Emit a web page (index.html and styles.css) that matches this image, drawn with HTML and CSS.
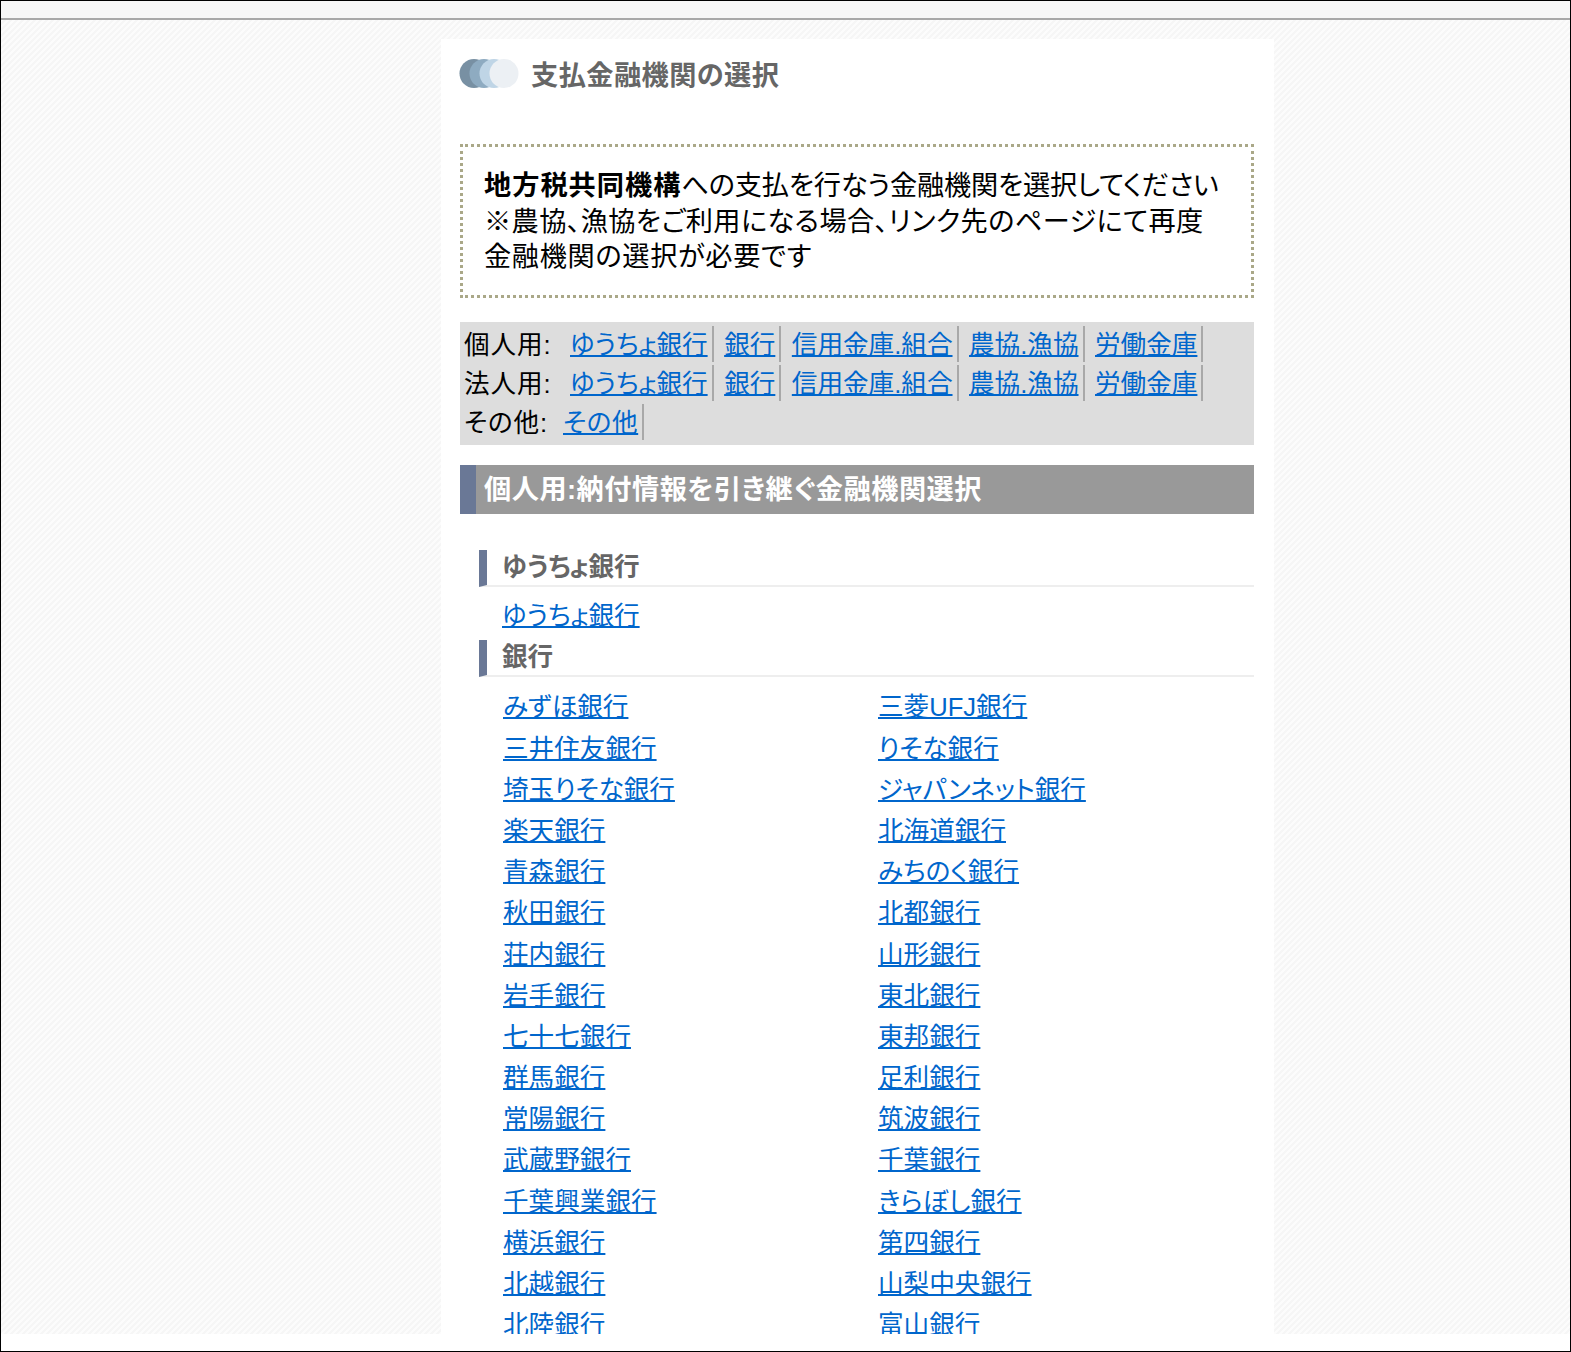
FILE: index.html
```html
<!DOCTYPE html>
<html lang="ja">
<head>
  <meta charset="UTF-8">
  <title>支払金融機関の選択</title>
  <link rel="stylesheet" href="styles.css">
</head>
<body>
  <div class="frame">
    <div class="topbar"></div>
    <div class="stage">
      <div class="column">

        <div class="page-title">
          <svg class="title-icon" width="60" height="31" viewBox="0 0 60 31">
            <defs><filter id="soft"><feGaussianBlur stdDeviation="0.5"/></filter></defs>
            <g filter="url(#soft)">
              <circle cx="15" cy="15.5" r="14.5" fill="#7890a3"/>
              <circle cx="25" cy="15.5" r="14.5" fill="#8eabc1"/>
              <circle cx="35" cy="15.5" r="14.5" fill="#bfd5e6"/>
              <circle cx="45" cy="15.5" r="14.5" fill="#ecf0f4"/>
            </g>
          </svg>
          <span>支払金融機関の選択</span>
        </div>

        <div class="notice">
          <div class="line-one"><strong>地方税共同機構</strong>への支払を行なう金融機関を選択してください</div>
          <div class="line-two">※農協、漁協をご利用になる場合、リンク先のページにて再度</div>
          <div class="line-three">金融機関の選択が必要です</div>
        </div>

        <div class="jump-nav">
          <div class="jump-row">
            <span class="jump-label wide">個人用:</span>
            <a href="#">ゆうちょ銀行</a>
            <a href="#">銀行</a>
            <a href="#">信用金庫.組合</a>
            <a href="#">農協.漁協</a>
            <a href="#">労働金庫</a>
          </div>
          <div class="jump-row">
            <span class="jump-label wide">法人用:</span>
            <a href="#">ゆうちょ銀行</a>
            <a href="#">銀行</a>
            <a href="#">信用金庫.組合</a>
            <a href="#">農協.漁協</a>
            <a href="#">労働金庫</a>
          </div>
          <div class="jump-row">
            <span class="jump-label">その他:</span>
            <a class="kana-link" href="#">その他</a>
          </div>
        </div>

        <h2 class="section-bar">個人用:納付情報を引き継ぐ金融機関選択</h2>

        <h3 class="group-title first">ゆうちょ銀行</h3>
        <div class="bank-list">
          <a href="#">ゆうちょ銀行</a>
        </div>

        <h3 class="group-title">銀行</h3>
        <div class="bank-grid">
          <div><a href="#">みずほ銀行</a></div>
          <div><a href="#">三菱UFJ銀行</a></div>
          <div><a href="#">三井住友銀行</a></div>
          <div><a href="#">りそな銀行</a></div>
          <div><a href="#">埼玉りそな銀行</a></div>
          <div><a href="#">ジャパンネット銀行</a></div>
          <div><a href="#">楽天銀行</a></div>
          <div><a href="#">北海道銀行</a></div>
          <div><a href="#">青森銀行</a></div>
          <div><a href="#">みちのく銀行</a></div>
          <div><a href="#">秋田銀行</a></div>
          <div><a href="#">北都銀行</a></div>
          <div><a href="#">荘内銀行</a></div>
          <div><a href="#">山形銀行</a></div>
          <div><a href="#">岩手銀行</a></div>
          <div><a href="#">東北銀行</a></div>
          <div><a href="#">七十七銀行</a></div>
          <div><a href="#">東邦銀行</a></div>
          <div><a href="#">群馬銀行</a></div>
          <div><a href="#">足利銀行</a></div>
          <div><a href="#">常陽銀行</a></div>
          <div><a href="#">筑波銀行</a></div>
          <div><a href="#">武蔵野銀行</a></div>
          <div><a href="#">千葉銀行</a></div>
          <div><a href="#">千葉興業銀行</a></div>
          <div><a href="#">きらぼし銀行</a></div>
          <div><a href="#">横浜銀行</a></div>
          <div><a href="#">第四銀行</a></div>
          <div><a href="#">北越銀行</a></div>
          <div><a href="#">山梨中央銀行</a></div>
          <div><a href="#">北陸銀行</a></div>
          <div><a href="#">富山銀行</a></div>
        </div>

      </div>
    </div>
  </div>
</body>
</html>
```

FILE: styles.css
```css
html, body {
  margin: 0;
  padding: 0;
  background: #ffffff;
}

body {
  font-family: "Liberation Sans", "Noto Sans CJK JP", sans-serif;
  font-size: 25.6px;
  font-feature-settings: "palt";
  color: #000000;
}

a {
  color: #0066cc;
  text-decoration-thickness: 2px;
}

.frame {
  box-sizing: border-box;
  width: 1571px;
  height: 1352px;
  border: 1px solid #000000;
  overflow: hidden;
}

.topbar {
  height: 17px;
  background: #f7f7f7;
  border-bottom: 2px solid #a8a8a8;
}

.stage {
  height: 1314px;
  padding-left: 440px;
  overflow: hidden;
  background-color: #fcfcfc;
  background-image: linear-gradient(135deg, #fcfcfc 25%, #f6f6f6 25%, #f6f6f6 50%, #fcfcfc 50%, #fcfcfc 75%, #f6f6f6 75%);
  background-size: 6px 6px;
}

.column {
  box-sizing: border-box;
  width: 833px;
  margin-top: 19px;
  padding: 0 20px 0 19px;
  background: #ffffff;
}

.page-title {
  display: flex;
  align-items: center;
  height: 105px;
  padding-bottom: 37px;
  box-sizing: border-box;
  font-size: 27.2px;
  font-weight: bold;
  letter-spacing: 0.45px;
  color: #666666;
}

.title-icon {
  margin: 0 12px 0 -1px;
}

.notice {
  box-sizing: border-box;
  height: 154px;
  padding: 21px 20px 0 21px;
  border: 3px dotted #aaa888;
  font-size: 27.2px;
  line-height: 35.5px;
}

.notice strong {
  letter-spacing: 1px;
}

.line-one {
  letter-spacing: -0.15px;
}

.line-two {
  letter-spacing: 0.4px;
}

.line-three {
  letter-spacing: 0.67px;
}

.jump-nav {
  margin-top: 24px;
  padding: 4px 4px 3px;
  background: #dddddd;
}

.jump-row {
  display: flex;
  height: 38.8px;
  line-height: 38px;
}

.jump-label {
  width: 99px;
  letter-spacing: 0.9px;
}

.jump-label.wide {
  width: 106px;
}

.jump-row a {
  height: 36px;
  margin-right: 10.5px;
  padding-right: 4px;
  border-right: 2px solid #a8a8a8;
}

.jump-row .kana-link {
  letter-spacing: 0.6px;
}

.section-bar {
  margin: 20px 0 0;
  height: 49px;
  padding-left: 8px;
  border-left: 16px solid #6a7896;
  background: #999999;
  color: #ffffff;
  font-size: 27.2px;
  font-weight: bold;
  letter-spacing: 0.5px;
  line-height: 49px;
}

.group-title {
  box-sizing: border-box;
  margin: 0 0 0 19px;
  height: 37px;
  padding-left: 15px;
  border-left: 8px solid #6a7896;
  border-bottom: 2px solid #eeeeee;
  color: #666666;
  font-size: 25.6px;
  font-weight: bold;
  line-height: 34px;
}

.group-title.first {
  margin-top: 36px;
}

.bank-list {
  height: 53px;
  padding-left: 42px;
  line-height: 58px;
}

.bank-grid {
  display: grid;
  grid-template-columns: 375px 375px;
  grid-auto-rows: 41.2px;
  padding: 10px 0 0 43px;
  line-height: 41.2px;
}
```
